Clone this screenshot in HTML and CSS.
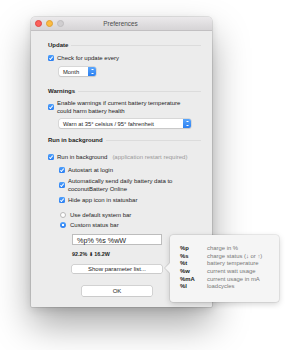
FILE: index.html
```html
<!DOCTYPE html>
<html lang="en">
<head>
  <meta charset="UTF-8" />
  <title>Preferences</title>
  <link rel="stylesheet" href="styles.css">
</head>
<body>
  <div class="window">
    <div class="titlebar">
      <div class="lights">
        <span class="light red"></span>
        <span class="light yellow"></span>
        <span class="light gray"></span>
      </div>
      <div class="title">Preferences</div>
    </div>

    <div class="content">
      <div class="section-head">Update</div>
      <label class="check row-update"><span class="box"></span>Check for update every</label>
      <div class="popup popup-month"><span class="popup-text">Month</span><span class="stepper"></span></div>

      <div class="section-head head-warn">Warnings</div>
      <label class="check two-line row-warn"><span class="box"></span>Enable warnings if current battery temperature<br>could harm battery health</label>
      <div class="popup popup-warn"><span class="popup-text">Warn at 35° celsius / 95° fahrenheit</span><span class="stepper"></span></div>

      <div class="section-head head-run">Run in background</div>
      <label class="check row-run"><span class="box"></span>Run in background<span class="hint">(application restart required)</span></label>
      <div class="sub">
        <label class="check row-auto"><span class="box"></span>Autostart at login</label>
        <label class="check two-line row-send"><span class="box"></span>Automatically send daily battery data to<br>coconutBattery Online</label>
        <label class="check row-hide"><span class="box"></span>Hide app icon in statusbar</label>
        <label class="radio row-default"><span class="dot"></span>Use default system bar</label>
        <label class="radio on row-custom"><span class="dot"></span>Custom status bar</label>
        <div class="field">%p% %s %wW</div>
        <div class="preview">92.2% <span class="arrow">⬇</span> 16.2W</div>
        <div class="button btn-params">Show parameter list...</div>
      </div>
      <div class="button btn-ok">OK</div>
    </div>
  </div>

  <div class="popover">
    <div class="pop-row"><b>%p</b><span>charge in %</span></div>
    <div class="pop-row"><b>%s</b><span>charge status (↓ or ↑)</span></div>
    <div class="pop-row"><b>%t</b><span>battery temperature</span></div>
    <div class="pop-row"><b>%w</b><span>current watt usage</span></div>
    <div class="pop-row"><b>%mA</b><span>current usage in mA</span></div>
    <div class="pop-row"><b>%l</b><span>loadcycles</span></div>
  </div>
</body>
</html>
```

FILE: styles.css
```css
body {
  margin: 0;
  background: #fff;
  font-family: "Liberation Sans", Arial, sans-serif;
  font-size: 6px;
  color: #1c1c1c;
  position: relative;
  width: 296px;
  height: 350px;
  overflow: hidden;
}
.window {
  width: 181px;
  margin: 17px 0 0 31px;
  background: #ececec;
  border-radius: 4px 4px 1px 1px;
  box-shadow: 0 0 0 0.5px rgba(0,0,0,0.18), 0 18px 36px rgba(0,0,0,0.34), 0 3px 8px rgba(0,0,0,0.12);
}
.titlebar {
  height: 13px;
  position: relative;
  display: flex;
  align-items: center;
  justify-content: center;
  background: linear-gradient(#ebe9eb, #d6d4d6);
  border-bottom: 0.5px solid #c2c0c2;
  border-radius: 4px 4px 0 0;
}
.lights {
  position: absolute;
  left: 4px;
  top: 3px;
  display: flex;
  gap: 4px;
}
.light {
  width: 7px;
  height: 7px;
  border-radius: 50%;
  box-sizing: border-box;
}
.red { background: #fc605b; border: 0.5px solid #de4541; }
.yellow { background: #fdbc40; border: 0.5px solid #dea034; }
.gray { background: #d0ced0; border: 0.5px solid #bebcbe; }
.title {
  color: #4c4c4c;
  font-size: 6.4px;
  margin-left: -2px;
}
.content {
  padding: 10px 11px 11px 17px;
}
.section-head {
  display: flex;
  align-items: center;
  height: 8px;
  font-weight: bold;
  color: #1e1e1e;
}
.section-head::after {
  content: "";
  flex: 1;
  height: 1px;
  margin-left: 3px;
  background: #dcdcdc;
}
.head-warn { margin-top: 11px; }
.head-run { margin-top: 8px; }

.check, .radio {
  display: flex;
  align-items: center;
  line-height: 8px;
  height: 8px;
}
.check.two-line {
  height: 16px;
}
.box {
  width: 6px;
  height: 6px;
  flex: none;
  margin-right: 3px;
  border-radius: 1.5px;
  background: linear-gradient(#4fa0fb, #2a7ef1);
  position: relative;
}
.box::after {
  content: "";
  position: absolute;
  left: 2px;
  top: 0.6px;
  width: 1.4px;
  height: 3px;
  border: solid #fff;
  border-width: 0 0.9px 0.9px 0;
  transform: rotate(40deg);
}
.row-update { margin-top: 5px; }
.row-warn { margin-top: 4px; }
.row-run { margin-top: 9px; }
.hint {
  color: #9a9a9a;
  margin-left: 5px;
}

.popup {
  display: flex;
  align-items: center;
  height: 9px;
  margin-left: 11px;
  background: #fff;
  border-radius: 2px;
  box-shadow: 0 0 0 0.5px #c6c6c6, 0 0.5px 1px rgba(0,0,0,0.15);
  overflow: hidden;
}
.popup-text {
  flex: 1;
  padding-left: 4px;
  font-size: 5.8px;
  color: #1c1c1c;
}
.stepper {
  width: 8px;
  height: 9px;
  background: linear-gradient(#5aa6fc, #2b7ff0);
  position: relative;
}
.stepper::before, .stepper::after {
  content: "";
  position: absolute;
  left: 2.5px;
  width: 3px;
  height: 0;
  border-left: 1.5px solid transparent;
  border-right: 1.5px solid transparent;
  box-sizing: border-box;
}
.stepper::before {
  top: 2px;
  border-bottom: 1.8px solid #fff;
}
.stepper::after {
  bottom: 2px;
  border-top: 1.8px solid #fff;
}
.popup-month {
  width: 37px;
  margin-top: 5px;
}
.popup-warn {
  width: 132px;
  margin-top: 4px;
}

.sub {
  margin-left: 11px;
}
.row-auto { margin-top: 5px; }
.row-send { margin-top: 3px; }
.row-hide { margin-top: 3px; }
.row-default { margin-top: 7px; }
.row-custom { margin-top: 2px; }
.dot {
  width: 6px;
  height: 6px;
  flex: none;
  margin: 0 4px 0 1px;
  border-radius: 50%;
  box-sizing: border-box;
  background: #fff;
  border: 0.5px solid #b8b8b8;
}
.radio.on .dot {
  border: none;
  background: radial-gradient(circle, #fff 0 1.2px, transparent 1.5px), linear-gradient(#4fa0fb, #2a7ef1);
}

.field {
  width: 90px;
  height: 11px;
  box-sizing: border-box;
  margin: 5px 0 0 13px;
  padding-left: 4px;
  line-height: 11px;
  font-size: 7.2px;
  background: #fff;
  border: 0.5px solid #bdbdbd;
  color: #1c1c1c;
}
.preview {
  margin: 5px 0 0 13px;
  height: 8px;
  line-height: 8px;
  font-weight: bold;
  font-size: 5.4px;
}
.arrow {
  font-size: 5px;
}
.button {
  height: 8px;
  line-height: 8px;
  box-sizing: border-box;
  text-align: center;
  background: #fff;
  border-radius: 1.5px;
  box-shadow: 0 0 0 0.5px #b8b8b8, 0 0.5px 0.5px rgba(0,0,0,0.12);
  color: #1c1c1c;
}
.btn-params {
  width: 90px;
  margin: 7px 0 0 13px;
}
.btn-ok {
  width: 70px;
  height: 10px;
  line-height: 10px;
  margin: 13px 0 0 34px;
}

.popover {
  position: absolute;
  left: 170px;
  top: 235px;
  width: 109px;
  height: 67px;
  box-sizing: border-box;
  padding: 10px 0 0 10px;
  background: #f5f5f5;
  border-radius: 3px;
  box-shadow: 0 0 0 0.5px rgba(0,0,0,0.12), 0 2px 6px rgba(0,0,0,0.18);
}
.popover::before {
  content: "";
  position: absolute;
  left: -5px;
  top: 28px;
  border-top: 5px solid transparent;
  border-bottom: 5px solid transparent;
  border-right: 5px solid #f5f5f5;
  filter: drop-shadow(-0.5px 0 0 rgba(0,0,0,0.12));
}
.pop-row {
  display: flex;
  height: 7.7px;
  line-height: 7.7px;
  font-size: 5.9px;
}
.pop-row b {
  width: 27px;
  color: #1c1c1c;
}
.pop-row span {
  color: #777;
}
```
